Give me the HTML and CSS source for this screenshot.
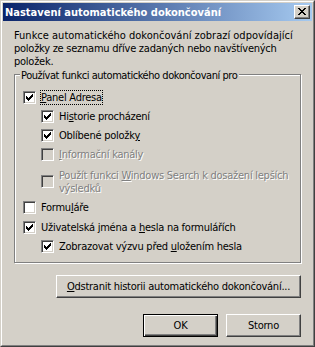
FILE: index.html
```html
<!DOCTYPE html>
<html lang="cs">
<head>
<meta charset="utf-8">
<title>Nastavení automatického dokončování</title>
<link rel="stylesheet" href="styles.css">
</head>
<body>
<div class="window">
  <div class="frame">
    <div class="titlebar">
      <span class="title">Nastavení automatického dokončování</span>
      <span class="close"><svg width="8" height="7" viewBox="0 0 8 7" shape-rendering="crispEdges"><path fill="#000" d="M0 0h2v1h-2z M6 0h2v1h-2z M1 1h2v1h-2z M5 1h2v1h-2z M2 2h4v1h-4z M3 3h2v1h-2z M2 4h4v1h-4z M1 5h2v1h-2z M5 5h2v1h-2z M0 6h2v1h-2z M6 6h2v1h-2z"/></svg></span>
    </div>
    <div class="content">
      <p class="desc"><span class="wide-line">Funkce automatického dokončování zobrazí odpovídající</span><br>položky ze seznamu dříve zadaných nebo navštívených<br>položek.</p>
      <div class="group">
        <span class="legend">Používat funkci automatického dokončovaní pro</span>
        <div class="row">
          <span class="cb"><svg width="7" height="7" viewBox="0 0 7 7" shape-rendering="crispEdges"><path d="M6 0h1v1h-1z M5 1h2v1h-2z M0 2h1v1h-1z M4 2h3v1h-3z M0 3h2v1h-2z M3 3h3v1h-3z M0 4h5v1h-5z M1 5h3v1h-3z M2 6h1v1h-1z"/></svg></span>
          <span class="lbl focus"><u>P</u>anel Adresa</span>
        </div>
        <div class="row sub">
          <span class="cb"><svg width="7" height="7" viewBox="0 0 7 7" shape-rendering="crispEdges"><path d="M6 0h1v1h-1z M5 1h2v1h-2z M0 2h1v1h-1z M4 2h3v1h-3z M0 3h2v1h-2z M3 3h3v1h-3z M0 4h5v1h-5z M1 5h3v1h-3z M2 6h1v1h-1z"/></svg></span>
          <span class="lbl">Hi<u>s</u>torie procházení</span>
        </div>
        <div class="row sub">
          <span class="cb"><svg width="7" height="7" viewBox="0 0 7 7" shape-rendering="crispEdges"><path d="M6 0h1v1h-1z M5 1h2v1h-2z M0 2h1v1h-1z M4 2h3v1h-3z M0 3h2v1h-2z M3 3h3v1h-3z M0 4h5v1h-5z M1 5h3v1h-3z M2 6h1v1h-1z"/></svg></span>
          <span class="lbl">Oblíbené položk<u>y</u></span>
        </div>
        <div class="row sub disabled">
          <span class="cb"></span>
          <span class="lbl"><u>I</u>nformační kanály</span>
        </div>
        <div class="row sub disabled two">
          <span class="cb"></span>
          <span class="lbl">Použít funkci <u>W</u>indows Search k dosažení lepších<br>výsledků</span>
        </div>
        <div class="row gap-a">
          <span class="cb"></span>
          <span class="lbl">Formu<u>l</u>áře</span>
        </div>
        <div class="row gap-b">
          <span class="cb"><svg width="7" height="7" viewBox="0 0 7 7" shape-rendering="crispEdges"><path d="M6 0h1v1h-1z M5 1h2v1h-2z M0 2h1v1h-1z M4 2h3v1h-3z M0 3h2v1h-2z M3 3h3v1h-3z M0 4h5v1h-5z M1 5h3v1h-3z M2 6h1v1h-1z"/></svg></span>
          <span class="lbl">Uživatelská jména a <u>h</u>esla na formulářích</span>
        </div>
        <div class="row sub">
          <span class="cb"><svg width="7" height="7" viewBox="0 0 7 7" shape-rendering="crispEdges"><path d="M6 0h1v1h-1z M5 1h2v1h-2z M0 2h1v1h-1z M4 2h3v1h-3z M0 3h2v1h-2z M3 3h3v1h-3z M0 4h5v1h-5z M1 5h3v1h-3z M2 6h1v1h-1z"/></svg></span>
          <span class="lbl">Zobrazovat výzvu před <u>u</u>ložením hesla</span>
        </div>
      </div>
      <div class="actions clear">
        <button class="btn wide"><u>O</u>dstranit historii automatického dokončování...</button>
      </div>
      <div class="actions main">
        <button class="btn default">OK</button>
        <button class="btn">Storno</button>
      </div>
    </div>
  </div>
</div>
</body>
</html>
```
FILE: styles.css
```css
html, body {
  margin: 0;
  padding: 0;
  background: #d4d0c8;
}
body {
  font-family: "DejaVu Sans", "Noto Sans", sans-serif;
  font-stretch: condensed;
  font-size: 11px;
  line-height: 13px;
  letter-spacing: -0.25px;
  color: #000;
}
.window {
  width: 315px;
  height: 347px;
  box-sizing: border-box;
  border: 1px solid;
  border-color: #d4d0c8 #404040 #404040 #d4d0c8;
  background: #d4d0c8;
}
.frame {
  height: 100%;
  box-sizing: border-box;
  border: 1px solid;
  border-color: #fff #808080 #808080 #fff;
  padding: 1px;
  display: flex;
  flex-direction: column;
}
.titlebar {
  height: 18px;
  flex: none;
  background: linear-gradient(to right, #0a246a, #a6caf0);
  display: flex;
  align-items: center;
  justify-content: space-between;
  padding: 0 2px 0 2px;
}
.title {
  color: #fff;
  font-weight: bold;
  letter-spacing: 0;
  white-space: nowrap;
}
.close {
  width: 16px;
  height: 14px;
  box-sizing: border-box;
  border: 1px solid;
  border-color: #fff #404040 #404040 #fff;
  box-shadow: inset -1px -1px 0 #808080;
  background: #d4d0c8;
  display: flex;
  padding: 2px 0 0 3px;
}
.content {
  padding: 8px 11px 0 11px;
}
.desc {
  margin: 0;
  white-space: nowrap;
}
.desc .wide-line {
  letter-spacing: 0;
}
.group {
  position: relative;
  margin-top: 6px;
  border: 1px solid #808080;
  box-shadow: inset 1px 1px 0 #fff, 1px 1px 0 #fff;
  padding: 16px 0 9px 8px;
  display: flex;
  flex-direction: column;
  gap: 6px;
}
.legend {
  position: absolute;
  top: -6px;
  left: 5px;
  padding: 0 2px 0 1px;
  background: #d4d0c8;
  white-space: nowrap;
  letter-spacing: -0.45px;
}
.row {
  display: flex;
  align-items: center;
}
.row.sub {
  padding-left: 18px;
}
.row.two {
  align-items: flex-start;
  margin-top: 2px;
}
.row.two .cb {
  margin-top: 6px;
}
.row.gap-b {
  margin-top: 1px;
}
.cb {
  flex: none;
  width: 13px;
  height: 13px;
  box-sizing: border-box;
  border: 1px solid;
  border-color: #808080 #fff #fff #808080;
  box-shadow: inset 1px 1px 0 #404040, inset -1px -1px 0 #d4d0c8;
  background: #fff;
  padding: 2px 0 0 2px;
  display: flex;
}
.disabled .cb {
  background: #d4d0c8;
}
.lbl {
  margin-left: 5px;
  white-space: nowrap;
}
.lbl u {
  text-underline-offset: 1px;
}
.disabled .lbl {
  color: #808080;
  text-shadow: 1px 1px 0 #fff;
}
.focus {
  outline: 1px dotted #000;
  outline-offset: 0;
}
.actions {
  display: flex;
  justify-content: flex-end;
}
.actions.clear {
  margin-top: 12px;
}
.actions.main {
  margin-top: 16px;
  gap: 8px;
}
.btn {
  font: inherit;
  letter-spacing: inherit;
  color: #000;
  height: 23px;
  width: 75px;
  box-sizing: border-box;
  background: #d4d0c8;
  border: 1px solid;
  border-color: #fff #404040 #404040 #fff;
  box-shadow: inset -1px -1px 0 #808080;
  padding: 0;
  margin: 0;
  white-space: nowrap;
}
.btn.wide {
  width: 245px;
}
.btn u {
  text-underline-offset: 1px;
}
.btn.default {
  border: 1px solid #000;
  box-shadow: inset 1px 1px 0 #fff, inset -1px -1px 0 #404040, inset -2px -2px 0 #808080;
}
```
